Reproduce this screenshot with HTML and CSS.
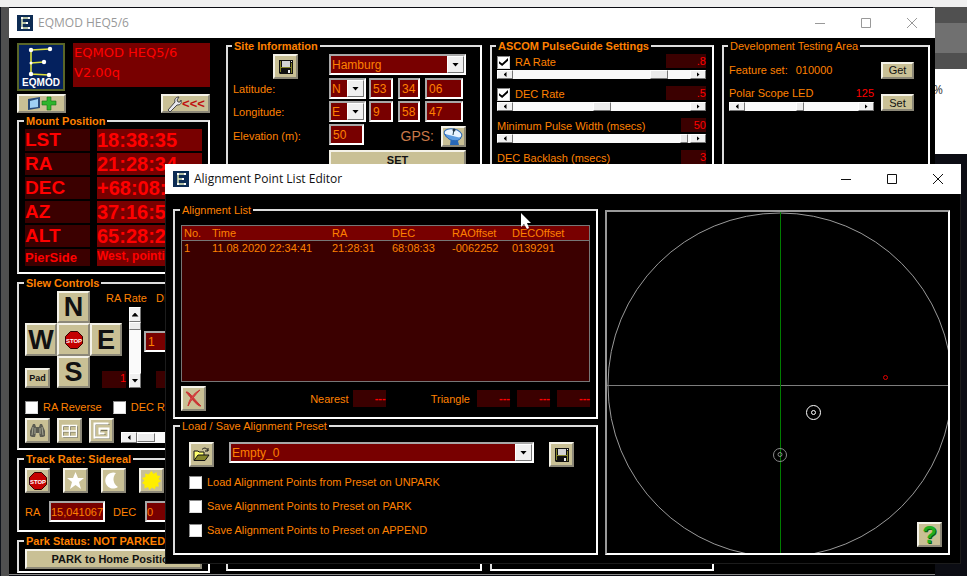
FILE: index.html
```html
<!DOCTYPE html>
<html lang="en">
<head>
<meta charset="utf-8">
<title>EQMOD HEQ5/6</title>
<link rel="stylesheet" href="styles.css">
</head>
<body>
<svg class="defs" aria-hidden="true">
  <symbol id="app" viewBox="0 0 16 16"><rect width="16" height="16" fill="#0d2c54"/><path d="M5 3h7M5 3v10h7M5 8h5" fill="none" stroke="#e8f0c0" stroke-width="1.4"/><path d="M4 2h2v2H4zM11 2h2v2h-2zM4 12h2v2H4zM11 12h2v2h-2zM9 7h2v2H9z" fill="#fff"/></symbol>
  <symbol id="floppy" viewBox="0 0 14 14"><path d="M0 0h14v14H1L0 13z" fill="#111"/><path d="M1 1h1v11H1zM12 3h1v10h-1zM2 7h10v1H2z" fill="#85852a"/><path d="M3 1h8v6H3z" fill="#d4d4d4"/><path d="M12 1h1v1h-1zM9 10h2v3H9z" fill="#eee"/></symbol>
  <symbol id="min" viewBox="0 0 12 12"><path d="M1 6.500h10" stroke="currentColor"/></symbol>
  <symbol id="max" viewBox="0 0 12 12"><path d="M1.500 1.500h9v9h-9z" fill="none" stroke="currentColor"/></symbol>
  <symbol id="close" viewBox="0 0 12 12"><path d="M1 1l10 10M11 1L1 11" stroke="currentColor"/></symbol>
</svg>

<div class="desktop">
  <div class="left-edge"></div>
  <div class="right-edge"><i class="band light"></i><i class="band dark"></i><div class="page-bit">%</div></div>

  <main class="window main-window">
    <header class="titlebar">
      <svg class="app-icon"><use href="#app"/></svg><h1>EQMOD HEQ5/6</h1>
      <div class="caption">
        <button aria-label="Minimize"><svg><use href="#min"/></svg></button>
        <button aria-label="Maximize"><svg><use href="#max"/></svg></button>
        <button aria-label="Close"><svg><use href="#close"/></svg></button>
      </div>
    </header>
    <div class="columns">
      <div class="col mount-col">
        <div class="brand">
          <svg class="logo" viewBox="0 0 48 48"><rect x="1" y="1" width="46" height="46" fill="#04215e" stroke="#5a6628" stroke-width="2"/><path d="M33 6L14 7v24l18 1M14 20l13-1" fill="none" stroke="#dfe23c" stroke-width="1.600"/><g fill="#fff"><circle cx="33" cy="6" r="2.200"/><circle cx="14" cy="7" r="2.200"/><circle cx="14" cy="20" r="1.500"/><circle cx="27" cy="19" r="2.200"/><circle cx="14" cy="31" r="2.200"/><circle cx="32" cy="32" r="2.200"/></g><text x="24" y="43" text-anchor="middle" class="logo-text">EQMOD</text></svg>
          <div class="banner">EQMOD HEQ5/6<br>V2.00q</div>
        </div>
        <div class="tools">
          <button class="btn tool" aria-label="Add display"><svg width="30" height="15" viewBox="0 0 30 15"><path d="M1 3l12-2v11L1 14z" fill="#284a78"/><path d="M3 5l8-2v8l-8 1z" fill="#9fd0f4"/><path d="M20 1h4v4h5v4h-5v5h-4V9h-5V5h5z" fill="#2db52d" stroke="#157015" stroke-width=".6"/></svg></button>
          <button class="btn tool" aria-label="Setup"><svg width="16" height="16" viewBox="0 0 16 16"><path d="M2 14l7-8c-1-3 1-5 4-5l-2 3 1 2h2l1-2c1 4-1 5-4 5l-7 7z" fill="#e8e8ee" stroke="#444"/></svg><span class="back">&lt;&lt;&lt;</span></button>
        </div>
        <fieldset>
          <legend>Mount Position</legend>
          <dl class="readout">
            <dt>LST</dt><dd>18:38:35</dd>
            <dt>RA</dt><dd>21:28:34</dd>
            <dt>DEC</dt><dd>+68:08:</dd>
            <dt>AZ</dt><dd>37:16:5</dd>
            <dt>ALT</dt><dd>65:28:2</dd>
            <dt class="pier">PierSide</dt><dd class="pier-value">West, pointing</dd>
          </dl>
        </fieldset>
        <fieldset class="slew">
          <legend>Slew Controls</legend>
          <div class="slew-top">
            <div class="pad">
              <button class="btn n">N</button><button class="btn w">W</button>
              <button class="btn halt" aria-label="Stop"><svg width="18" height="18" viewBox="0 0 18 18"><path d="M5.500 .5h7l5 5v7l-5 5h-7l-5-5v-7z" fill="#c40000" stroke="#300"/><text x="9" y="11.500" text-anchor="middle" class="stop-text">STOP</text></svg></button>
              <button class="btn e">E</button><button class="btn s">S</button>
              <button class="btn pad-btn">Pad</button>
            </div>
            <div class="rates">
              <label for="rarate">RA Rate</label><span class="cut">DEC Rate</span>
              <output class="led rate-led">1</output>
              <div class="vscroll"><button aria-label="Up"><i class="tri up"></i></button><input id="rarate" type="range" min="0" max="100" value="0"><button aria-label="Down"><i class="tri"></i></button></div>
              <input class="box preset" aria-label="Rate preset" value="1">
              <output class="led dec-led"></output>
            </div>
          </div>
          <div class="reverse"><label class="check"><input type="checkbox">RA Reverse</label><label class="check"><input type="checkbox">DEC Reverse</label></div>
          <div class="slew-bottom">
            <button class="btn icon" aria-label="Find"><svg width="17" height="17" viewBox="0 0 17 17"><path d="M4 2h2l1 3h3l1-3h2l3 7v5l-2 1h-3l-1-4H7l-1 4H3l-2-1V9z" fill="#5c5c52"/><path d="M4 5l-1 8M6 6v6M11 6v6M13 5l1 8" stroke="#b9b9a5" stroke-width=".8"/></svg></button>
            <button class="btn icon" aria-label="Mosaic"><svg width="17" height="17" viewBox="0 0 17 17"><path d="M2.500 4.500h14v11h-14zM9.500 4v11M2 10h14" fill="none" stroke="#77745d"/><path d="M1.500 3.500h14v11h-14zM8.500 3v11M1 9h14" fill="none" stroke="#fff" stroke-width="1.400"/></svg></button>
            <button class="btn icon" aria-label="Spiral"><svg width="17" height="17" viewBox="0 0 17 17"><path d="M16.500 2.500h-14v14h14v-8h-9v4h5" fill="none" stroke="#77745d"/><path d="M15.500 1.500h-14v14h14v-9h-9v5h5" fill="none" stroke="#fff" stroke-width="2"/></svg></button>
            <div class="hscroll"><button aria-label="Decrease"><i class="tri left"></i></button><input type="range" class="wide" aria-label="Limit" value="0"></div>
          </div>
        </fieldset>
        <fieldset class="track">
          <legend>Track Rate: Sidereal</legend>
          <div class="track-buttons">
            <button class="btn icon" aria-label="Stop tracking"><svg width="18" height="18" viewBox="0 0 18 18"><path d="M5.500 .5h7l5 5v7l-5 5h-7l-5-5v-7z" fill="#c40000" stroke="#300"/><text x="9" y="11.500" text-anchor="middle" class="stop-text">STOP</text></svg></button>
            <button class="btn icon" aria-label="Sidereal"><svg width="19" height="19" viewBox="0 0 19 19"><path d="M9.500 1l2.500 6h6l-5 4 2 7-5.500-4L4 18l2-7-5-4h6z" fill="#fff"/></svg></button>
            <button class="btn icon" aria-label="Lunar"><svg width="19" height="19" viewBox="0 0 19 19"><path d="M12 2a8 8 0 1 0 2 14A9 9 0 0 1 12 2z" fill="#fff"/></svg></button>
            <button class="btn icon" aria-label="Solar"><svg width="19" height="19" viewBox="0 0 19 19"><path d="M9.500 0l2 3 3-2 .5 3.500 3.500.5-2 3 2.500 2-3 2 1 3.500-3.500 0-.5 3-3-2-2.500 2.500-1.500-3-3.500 1.500 0-4L0 12l2.500-2.500L0 7l3.500-1L3 2.500l3.500 1z" fill="#ffee00"/></svg></button>
          </div>
          <div class="track-rates">
            <label for="tra">RA</label><input class="box" id="tra" value="15,041067">
            <label for="tdec">DEC</label><input class="box" id="tdec" value="0">
          </div>
        </fieldset>
        <fieldset class="park">
          <legend>Park Status: NOT PARKED</legend>
          <button class="btn park-btn">PARK to Home Position</button>
        </fieldset>
      </div>

      <fieldset class="col site">
        <legend>Site Information</legend>
        <div class="site-row head">
          <button class="btn icon" aria-label="Save site"><svg width="14" height="14"><use href="#floppy"/></svg></button>
          <div class="combo fill"><select aria-label="Site"><option>Hamburg</option></select><span><i class="tri"></i></span></div>
        </div>
        <div class="site-row"><label for="lat">Latitude:</label>
          <div class="fields"><div class="combo hemi"><select id="lat"><option>N</option></select><span><i class="tri"></i></span></div><input class="box deg" aria-label="Latitude degrees" value="53"><input class="box minute" aria-label="Latitude minutes" value="34"><input class="box sec" aria-label="Latitude seconds" value="06"></div></div>
        <div class="site-row"><label for="lon">Longitude:</label>
          <div class="fields"><div class="combo hemi"><select id="lon"><option>E</option></select><span><i class="tri"></i></span></div><input class="box deg" aria-label="Longitude degrees" value="9"><input class="box minute" aria-label="Longitude minutes" value="58"><input class="box sec" aria-label="Longitude seconds" value="47"></div></div>
        <div class="site-row elevation"><label for="elev">Elevation (m):</label>
          <div class="fields gps-row"><input class="box" id="elev" value="50"><span class="gps">GPS:</span>
          <button class="btn gps-btn" aria-label="Read GPS"><svg width="21" height="19" viewBox="0 0 21 19"><path d="M8 10h6l2 8H7z" fill="#2868b8"/><ellipse cx="10" cy="7" rx="9" ry="5" transform="rotate(12 10 7)" fill="#e9f4ff" stroke="#2867b4"/><path d="M2 7c2 7 13 9 16 4" fill="#5b9be0" stroke="#2867b4"/><path d="M10 8l1-6" stroke="#245"/><circle cx="11" cy="3" r="1.500" fill="#234"/></svg></button></div></div>
        <div class="site-row"><span></span><button class="btn set-btn">SET</button></div>
      </fieldset>

      <fieldset class="col pulse">
        <legend>ASCOM PulseGuide Settings</legend>
        <div class="param"><div class="line"><label class="check"><input type="checkbox" checked>RA Rate</label><output class="led">.8</output></div>
          <div class="hscroll"><button aria-label="Decrease"><i class="tri left"></i></button><input type="range" class="wide" aria-label="RA rate" value="86"><button aria-label="Increase"><i class="tri right"></i></button></div></div>
        <div class="param"><div class="line"><label class="check"><input type="checkbox" checked>DEC Rate</label><output class="led">.5</output></div>
          <div class="hscroll"><button aria-label="Decrease"><i class="tri left"></i></button><input type="range" class="wide" aria-label="DEC rate" value="50"><button aria-label="Increase"><i class="tri right"></i></button></div></div>
        <div class="param"><div class="line"><label for="mpw">Minimum Pulse Width (msecs)</label><output class="led small">50</output></div>
          <div class="hscroll"><button aria-label="Decrease"><i class="tri left"></i></button><input type="range" id="mpw" value="99"><button aria-label="Increase"><i class="tri right"></i></button></div></div>
        <div class="param"><div class="line"><span>DEC Backlash (msecs)</span><output class="led small">3</output></div></div>
      </fieldset>

      <fieldset class="col dev">
        <legend>Development Testing Area</legend>
        <div class="dev-row"><div class="feature"><span>Feature set:</span><span>010000</span></div><button class="btn dev-btn">Get</button></div>
        <div class="dev-row"><div class="polar"><div class="polar-label"><label for="led">Polar Scope LED</label><output>125</output></div>
          <div class="hscroll"><button aria-label="Decrease"><i class="tri left"></i></button><input type="range" id="led" value="49"><button aria-label="Increase"><i class="tri right"></i></button></div></div><button class="btn dev-btn">Set</button></div>
      </fieldset>
    </div>
  </main>

  <section class="window editor">
    <header class="titlebar">
      <svg class="app-icon"><use href="#app"/></svg><h2>Alignment Point List Editor</h2>
      <div class="caption">
        <button aria-label="Minimize"><svg><use href="#min"/></svg></button>
        <button aria-label="Maximize"><svg><use href="#max"/></svg></button>
        <button aria-label="Close"><svg><use href="#close"/></svg></button>
      </div>
    </header>
    <div class="editor-body">
      <div class="editor-left">
        <fieldset class="plain list">
          <legend>Alignment List</legend>
          <div class="table-box">
            <table>
              <colgroup><col class="c-no"><col class="c-time"><col class="c-num"><col class="c-num"><col class="c-num"><col></colgroup>
              <thead><tr><th>No.</th><th>Time</th><th>RA</th><th>DEC</th><th>RAOffset</th><th>DECOffset</th></tr></thead>
              <tbody><tr><td>1</td><td>11.08.2020 22:34:41</td><td>21:28:31</td><td>68:08:33</td><td>-0062252</td><td>0139291</td></tr></tbody>
            </table>
          </div>
          <div class="list-foot">
            <button class="btn icon" aria-label="Delete point"><svg width="19" height="19" viewBox="0 0 19 19"><path d="M2 3c3-1 8 7 13 12l2 2c-3 1-10-8-15-14z" fill="#c93434" stroke="#c93434"/><path d="M16 1C10 4 5 10 4 17c3-6 7-11 12-16z" fill="#e04a4a" stroke="#c93434"/></svg></button>
            <span class="nearest">Nearest</span><output class="led dash">---</output>
            <span class="triangle">Triangle</span><output class="led dash">---</output><output class="led dash">---</output><output class="led dash">---</output>
          </div>
        </fieldset>
        <fieldset class="plain presets">
          <legend>Load / Save Alignment Preset</legend>
          <div class="preset-row">
            <button class="btn icon" aria-label="Load preset"><svg width="17" height="15" viewBox="0 0 17 15"><path d="M1 13V4h4l1 1h5v3" fill="#ffff70" stroke="#111"/><path d="M1 13.500L5 8h11l-4 5.500z" fill="#85852a" stroke="#111"/><path d="M9 2.500c2-2 4-2 6 1M15 1v3h-3" fill="none" stroke="#111"/></svg></button>
            <div class="combo fill"><select aria-label="Preset"><option>Empty_0</option></select><span><i class="tri"></i></span></div>
            <button class="btn icon" aria-label="Save preset"><svg width="14" height="14"><use href="#floppy"/></svg></button>
          </div>
          <label class="check"><input type="checkbox">Load Alignment Points from Preset on UNPARK</label>
          <label class="check"><input type="checkbox">Save Alignment Points to Preset on PARK</label>
          <label class="check"><input type="checkbox">Save Alignment Points to Preset on APPEND</label>
        </fieldset>
      </div>
      <div class="scope">
        <svg viewBox="0 0 341 341" preserveAspectRatio="xMinYMin meet" fill="none">
          <circle cx="173" cy="173" r="172" stroke="#9a9a9a"/>
          <path d="M0 173.500h341" stroke="#7d7d7d"/><path d="M173.500 0v341" stroke="#007c00"/>
          <circle cx="278.500" cy="165.500" r="2" stroke="#e00000"/>
          <circle cx="206.500" cy="200.500" r="7" stroke="#fff"/><circle cx="206.500" cy="200.500" r="2" stroke="#fff"/>
          <circle cx="173" cy="243" r="6.500" stroke="#8a8a8a"/><circle cx="173" cy="242.500" r="2" stroke="#8a8a8a"/>
        </svg>
        <button class="btn icon help" aria-label="Help">?</button>
      </div>
    </div>
  </section>

  <svg class="cursor" viewBox="0 0 12 18"><path d="M1 1v14l3-3 3 5 2-1-2-5h4z" fill="#fff"/></svg>
</div>
</body>
</html>
```
FILE: styles.css
```css
* { box-sizing: border-box; }
body { margin: 0; font: 11px/14px "Liberation Sans", Arial, sans-serif; color: #ff8000; background: #0c0d14; overflow: hidden; }
button, input, select { font: inherit; color: inherit; margin: 0; }
h1, h2, dl, dd { margin: 0; }
.defs { position: absolute; width: 0; height: 0; }

.desktop { position: relative; min-height: 100vh; overflow: hidden; display: flex; justify-content: space-between; border-top: 7px solid #f0f0f0; background: #0c0d14; }
.left-edge { width: 9px; background: #505050; border-left: 1px solid #10141c; }
.right-edge { width: 34px; height: 147px; display: flex; flex-direction: column; background: #505050; padding-top: 16px; }
.band { height: 30px; background: #707070; }
.band.dark { height: 16px; background: #505050; }
.page-bit { flex: 1; background: #fff; color: #333; font: 12px/14px "Open Sans", sans-serif; padding-top: 14px; }

.window { position: absolute; background: #000; }
.main-window { left: 9px; right: 32px; top: 1px; border-bottom: 1px solid #888; }
.editor { left: 165px; right: 6px; top: 157px; outline: 1px solid #1c1c1c; outline-offset: -1px; }
.titlebar { position: relative; display: flex; align-items: center; height: 30px; background: #fff; padding-left: 8px; color: #111; }
.titlebar h1, .titlebar h2 { flex: 1; margin-left: 5px; font: 12px/16px "Open Sans", "Noto Sans", sans-serif; }
.main-window .titlebar { color: #999; }
.app-icon { width: 16px; height: 16px; }
.caption { display: flex; }
.caption button { width: 46px; height: 30px; padding: 0; border: 0; background: none; display: grid; place-items: center; }
.caption svg { width: 12px; height: 12px; }

.columns { display: grid; grid-template-columns: 201px 256px 224px 1fr; gap: 8px; padding: 1px 5px 1px 8px; }
.mount-col { padding: 4px 8px 0 0; }
fieldset { margin: 0 0 2px; min-width: 0; padding: 1px 6px 6px; border: 2px solid #fff; border-color: #ddd #fff #fff #ddd; }
legend { padding: 0 2px; margin-left: -1px; font-weight: bold; }
.plain legend, .dev legend { font-weight: normal; }

.btn { display: flex; flex: none; align-items: center; justify-content: center; padding: 0; background: #c9c095; border: 2px solid; border-color: #f4f2e8 #8c8878 #8c8878 #f4f2e8; color: #111; }
.btn.icon { width: 25px; height: 25px; }
.led { background: #3b0000; color: #ff0000; text-align: right; }
.box { min-width: 0; height: 21px; padding: 0 2px; background: #780000; border: 2px solid; border-color: #a8a8a8 #fff #fff #a8a8a8; border-radius: 0; font-size: 12px; }
.combo { display: flex; height: 21px; background: #780000; border: 2px solid; border-color: #a8a8a8 #fff #fff #a8a8a8; }
.combo select { appearance: none; flex: 1; min-width: 0; border: 0; background: none; padding: 0 1px; font-size: 12px; }
.combo span { display: grid; place-items: center; width: 17px; background: #f0f0f0; border: 1px solid; border-color: #fff #777 #777 #fff; }
.fill { flex: 1; }
.tri { display: block; width: 7px; height: 4px; background: #000; clip-path: polygon(0 0, 100% 0, 50% 100%); }
.tri.up { clip-path: polygon(50% 0, 100% 100%, 0 100%); }
.tri.left, .tri.right { width: 3px; height: 5px; clip-path: polygon(100% 0, 100% 100%, 0 50%); }
.tri.right { clip-path: polygon(0 0, 100% 50%, 0 100%); }
.check { display: flex; align-items: center; gap: 5px; white-space: nowrap; }
.check input { appearance: none; flex: none; width: 13px; height: 13px; background: #fff; border: 1px solid; border-color: #888 #ddd #ddd #888; display: grid; place-items: center; }
.check input:checked::before { content: ""; width: 9px; height: 8px; background: #000; clip-path: polygon(0 40%, 35% 70%, 100% 0, 100% 35%, 35% 100%, 0 70%); }

.hscroll { display: flex; height: 9px; }
.hscroll button, .vscroll button { display: grid; place-items: center; flex: none; padding: 0; background: #f0f0f0; border: 1px solid; border-color: #fff #777 #777 #fff; }
.hscroll button { width: 16px; }
.hscroll input { appearance: none; flex: 1; min-width: 0; background: #fafafa; height: 9px; }
input[type="range"]::-webkit-slider-thumb { appearance: none; width: 8px; height: 9px; background: #ececec; border: 1px solid; border-color: #fff #777 #777 #fff; }
input.wide::-webkit-slider-thumb { width: 18px; }

.brand { display: flex; gap: 8px; }
.logo { width: 48px; height: 48px; flex: none; }
.logo-text { font: bold 10px "Liberation Sans", sans-serif; fill: #fff; }
.stop-text { font: bold 6px "Liberation Sans", sans-serif; fill: #fff; }
.banner { flex: 1; height: 44px; background: #780000; color: #f00; font: 13px/20px "DejaVu Sans", sans-serif; padding-left: 1px; white-space: nowrap; }
.tools { display: flex; justify-content: space-between; margin: 3px 0 1px; }
.tool { width: 49px; height: 19px; }
.back { color: #c01010; font: bold 13px/14px "Liberation Sans", sans-serif; }
.readout { display: grid; grid-template-columns: 65px 1fr; gap: 2px 7px; font: bold 19px/22px "Liberation Sans", sans-serif; color: #f00; }
.readout dt { background: #3b0000; }
.readout dd { background: #780000; white-space: nowrap; font-size: 20px; }
.readout .pier { font-size: 13px; line-height: 17px; }
.readout .pier-value { font-size: 12px; line-height: 15px; }

.slew { padding-bottom: 5px; overflow: hidden; }
.slew-top { display: flex; }
.pad { display: grid; grid-template-columns: 32px 33px 32px; grid-template-rows: 32px 33px 32px; }
.pad .btn { font-size: 27px; line-height: 28px; font-weight: bold; }
.n, .s, .halt { grid-column: 2; }
.n { grid-row: 1; }
.w { grid-column: 1; grid-row: 2; }
.halt { grid-row: 2; }
.e { grid-column: 3; grid-row: 2; }
.s { grid-row: 3; }
.pad .pad-btn { grid-column: 1; grid-row: 3; width: 25px; height: 20px; align-self: end; font-size: 9px; line-height: 12px; }
.rates { display: grid; grid-template-columns: 24px 3px 12px 3px 12px 30px; grid-template-rows: 16px 24px 21px 19px 17px; margin-left: -20px; white-space: nowrap; }
.rates label { grid-column: 1 / 5; margin-left: 4px; }
.cut { grid-column: 6; }
.rate-led { grid-area: 5 / 1; }
.vscroll { grid-area: 2 / 3 / 6 / 4; display: flex; flex-direction: column; background: #fafafa; }
.vscroll button { height: 15px; }
.vscroll input { appearance: none; writing-mode: vertical-lr; flex: 1; min-height: 0; width: 12px; background: #fafafa; }
.vscroll input::-webkit-slider-thumb { width: 12px; height: 8px; }
.preset { grid-area: 3 / 5 / 4 / 7; }
.dec-led { grid-area: 5 / 6; }
.reverse { display: flex; gap: 11px; margin-top: 12px; }
.slew-bottom { display: flex; gap: 7px; margin-top: 4px; }
.slew-bottom .hscroll { flex: 1; align-self: end; height: 11px; }
.slew-bottom .hscroll input { height: 11px; }
.track { padding: 2px 6px 8px; }
.track-buttons { display: flex; gap: 13px; }
.track-rates { display: grid; grid-template-columns: 24px 56px 40px 1fr; align-items: center; margin-top: 8px; }
.track-rates label + .box + label { margin-left: 8px; }
.track-rates .box { width: 100%; padding: 0; font-size: 11px; }
.park { padding-bottom: 2px; margin: 0; }
.park-btn { width: 100%; height: 20px; font-size: 11px; font-weight: bold; }

.site { display: flex; flex-direction: column; padding-left: 5px; }
.site-row { display: grid; grid-template-columns: 96px 1fr; align-items: center; margin-bottom: 2px; padding-right: 8px; }
.head { height: 22px; align-items: start; }
.head .btn { margin-left: 40px; }
.fields { display: flex; }
.hemi { width: 37px; margin-right: 3px; }
.deg { width: 24px; margin-right: 5px; }
.minute { width: 22px; margin-right: 5px; }
.sec { width: 38px; }
.elevation { height: 24px; }
.gps-row { height: 24px; align-items: center; justify-content: space-between; }
#elev { width: 35px; align-self: start; }
.gps { flex: 1; text-align: right; padding-right: 7px; font-size: 14px; color: #c87848; }
.gps-btn { width: 25px; height: 21px; }
.set-btn { height: 20px; font-weight: bold; }

.pulse { padding: 1px 6px 0 5px; }
.param { margin-bottom: 7px; }
.line { display: flex; justify-content: space-between; height: 16px; align-items: center; }
.line .led { width: 40px; height: 14px; align-self: start; }
.line .small { width: 25px; }
.dev { align-self: start; min-height: 480px; padding: 8px 14px 0 5px; }
.dev-row { display: flex; justify-content: space-between; align-items: end; gap: 7px; margin-bottom: 6px; height: 26px; }
.dev-row:first-of-type { height: 18px; align-items: center; }
.feature { display: flex; gap: 8px; }
.polar { flex: 1; min-width: 0; }
.polar-label { display: flex; justify-content: space-between; margin-bottom: 2px; }
.polar output { color: #f00; }
.dev-btn { width: 33px; height: 17px; }

.editor-body { display: grid; grid-template-columns: 425px 1fr; gap: 7px; padding: 9px 11px 9px 8px; }
.plain { margin: 0; }
.list { padding-top: 8px; }
.table-box { height: 157px; border: 1px solid #777; background: #3b0000; }
table { width: 100%; table-layout: fixed; border-collapse: collapse; }
.c-no { width: 28px; }
.c-time { width: 120px; }
.c-num { width: 60px; }
th, td { padding: 0 2px; font-weight: normal; text-align: left; white-space: nowrap; }
th { background: #780000; border-bottom: 1px solid #777; }
.list-foot { display: flex; align-items: center; gap: 7px; margin-top: 4px; }
.nearest { margin-left: auto; }
.triangle { margin-left: 38px; }
.nearest + .led { margin-left: -3px; }
.dash { width: 33px; height: 17px; line-height: 17px; font-weight: bold; }
.presets { padding: 9px 6px 16px 14px; }
.presets legend { margin-left: -9px; }
.preset-row { display: flex; gap: 15px; align-items: start; padding-right: 16px; margin-bottom: 8px; }
.presets .check { height: 14px; margin-bottom: 10px; }
.presets .check:last-child { margin-bottom: 0; }
.scope { position: relative; margin-top: 7px; border: 2px solid; border-color: #999 #fff #fff #999; }
.scope > svg { display: block; width: 100%; height: 100%; }
.help { position: absolute; right: 6px; bottom: 6px; font: bold 24px/20px "Liberation Sans", sans-serif; color: #1fae1f; text-shadow: 1px 1px 0 #0b5a0b; }
.cursor { position: absolute; left: 520px; top: 205px; width: 12px; height: 18px; }
```
